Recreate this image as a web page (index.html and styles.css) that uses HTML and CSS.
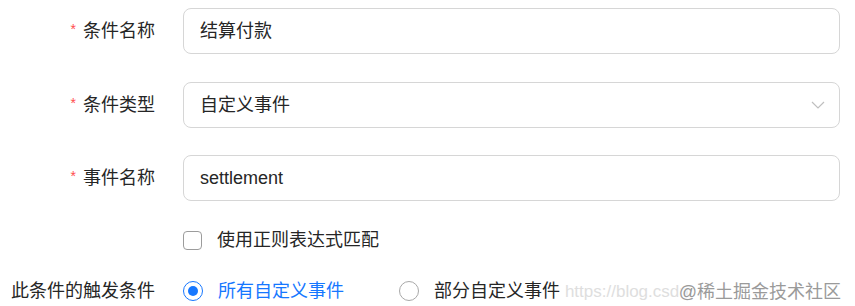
FILE: index.html
```html
<!DOCTYPE html>
<html lang="zh-CN">
<head>
<meta charset="utf-8">
<title>条件设置</title>
<link rel="stylesheet" href="styles.css">
</head>
<body>
<div class="form">
  <div class="row row-first">
    <div class="label"><span class="req">*</span>条件名称</div>
    <div class="input"><span class="value">结算付款</span></div>
  </div>
  <div class="row row-second">
    <div class="label"><span class="req">*</span>条件类型</div>
    <div class="input select">
      <span class="value">自定义事件</span>
      <svg class="chevron" width="14" height="8" viewBox="0 0 14 8"><path d="M1 1 L7 7 L13 1" fill="none" stroke="#bfbfbf" stroke-width="1.2"/></svg>
    </div>
  </div>
  <div class="row row-third">
    <div class="label"><span class="req">*</span>事件名称</div>
    <div class="input"><span class="value">settlement</span></div>
  </div>
  <div class="row row-check">
    <div class="label"></div>
    <label class="check"><span class="box"></span><span>使用正则表达式匹配</span></label>
  </div>
  <div class="row row-radio">
    <div class="label">此条件的触发条件</div>
    <div class="radios">
      <label class="radio checked"><span class="dot"></span><span>所有自定义事件</span></label>
      <label class="radio"><span class="dot"></span><span>部分自定义事件</span></label>
    </div>
  </div>
</div>
<div class="watermark"><span class="csdn">https://blog.csdn</span><span class="juejin">@稀土掘金技术社区</span></div>
</body>
</html>
```
FILE: styles.css
```css
html, body {
  margin: 0;
  padding: 0;
  background: #ffffff;
}
body {
  font-family: "Liberation Sans", "Noto Sans CJK SC", sans-serif;
  font-size: 18px;
  color: #262626;
  width: 855px;
  height: 306px;
  overflow: hidden;
  position: relative;
}
.form {
  display: flex;
  flex-direction: column;
  padding: 8px 15px 0 0;
}
.row {
  display: grid;
  grid-template-columns: 155px 1fr;
  column-gap: 28px;
  align-items: center;
}
.row-second { margin-top: 28px; }
.row-third { margin-top: 27px; }
.row-check { margin-top: 26px; height: 26px; }
.row-radio { margin-top: 25px; height: 26px; }
.label {
  text-align: right;
  line-height: 24px;
  white-space: nowrap;
  color: #262626;
}
.req {
  color: #ff4d4f;
  font-size: 14px;
  font-family: "Liberation Sans", sans-serif;
  margin-right: 7px;
  position: relative;
  top: -3px;
}
.input {
  height: 46px;
  box-sizing: border-box;
  border: 1px solid #d6d6d6;
  border-radius: 8px;
  padding: 0 14px 0 16px;
  display: flex;
  align-items: center;
}
.value {
  line-height: 24px;
}
.chevron {
  margin-left: auto;
}
.check {
  display: flex;
  align-items: center;
  gap: 15px;
  line-height: 24px;
}
.box {
  width: 19px;
  height: 19px;
  box-sizing: border-box;
  border: 1px solid #9c9c9c;
  border-radius: 4px;
}
.radios {
  display: flex;
  align-items: center;
  gap: 55px;
}
.radio {
  display: flex;
  align-items: center;
  gap: 15px;
  line-height: 24px;
}
.dot {
  width: 20px;
  height: 20px;
  box-sizing: border-box;
  border: 1px solid #a8a8a8;
  border-radius: 50%;
  display: flex;
  align-items: center;
  justify-content: center;
}
.radio.checked { color: #1677ff; }
.radio.checked .dot { border-color: #1677ff; }
.radio.checked .dot::after {
  content: "";
  width: 10px;
  height: 10px;
  border-radius: 50%;
  background: #1677ff;
}
.watermark {
  position: absolute;
  right: 14px;
  top: 279px;
  display: flex;
  align-items: center;
  line-height: 26px;
  white-space: nowrap;
}
.csdn {
  color: #dedede;
  font-size: 17px;
  margin-right: -10px;
}
.juejin {
  color: #9a9a9a;
  font-size: 18px;
  position: relative;
  text-shadow: 0 0 2px #ffffff, 0 0 2px #ffffff, 0 0 3px #ffffff;
}
```
